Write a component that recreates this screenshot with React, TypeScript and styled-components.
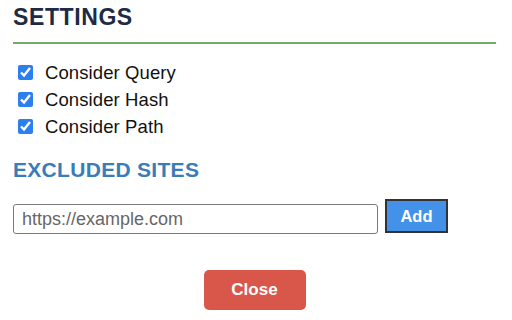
import React from "react";
import styled, { createGlobalStyle } from "styled-components";

const GlobalStyle = createGlobalStyle`
    html, body {
        margin: 0;
        padding: 0;
        background: #ffffff;
        font-family: "Liberation Sans", Arial, sans-serif;
    }
`;

const Panel = styled.div`
    width: 483px;
    padding: 4px 0 0 13px;
    display: flex;
    flex-direction: column;
`;

const Title = styled.h1`
    margin: 0;
    font-size: 23px;
    line-height: 26px;
    font-weight: 700;
    letter-spacing: 0.6px;
    color: #1e2b45;
    padding-bottom: 12px;
    border-bottom: 2px solid #72aa6a;
`;

const OptionList = styled.div`
    margin-top: 15px;
    display: flex;
    flex-direction: column;
`;

const OptionRow = styled.label`
    height: 27px;
    display: flex;
    align-items: center;
    padding-left: 5px;
    font-size: 18.5px;
    letter-spacing: 0.1px;
    color: #111;

    input {
        width: 15px;
        height: 15px;
        margin: 0 12px 0 0;
        accent-color: #2d7ff0;
    }
`;

const SubTitle = styled.h2`
    margin: 18px 0 0;
    font-size: 21px;
    line-height: 24px;
    font-weight: 700;
    letter-spacing: 0.3px;
    color: #3a7cb8;
`;

const AddRow = styled.div`
    margin-top: 17px;
    display: flex;
    align-items: flex-start;
`;

const SiteInput = styled.input`
    box-sizing: border-box;
    width: 365px;
    height: 30px;
    margin-top: 5px;
    padding: 0 8px;
    border: 1px solid #7a7a7a;
    border-radius: 3px;
    font-family: "Liberation Sans", Arial, sans-serif;
    font-size: 18px;
    color: #222;

    &::placeholder {
        color: #666;
    }
`;

const Button = styled.button<{ $bg: string }>`
    box-sizing: border-box;
    background: ${(p) => p.$bg};
    color: #fff;
    font-family: "Liberation Sans", Arial, sans-serif;
    font-weight: 700;
    cursor: pointer;
`;

const AddButton = styled(Button)`
    width: 63px;
    height: 34px;
    margin-left: 7px;
    border: 2px solid #333;
    font-size: 16.5px;
`;

const Footer = styled.div`
    margin-top: 36px;
    display: flex;
    justify-content: center;
`;

const CloseButton = styled(Button)`
    width: 102px;
    height: 40px;
    border: none;
    border-radius: 5px;
    font-size: 17px;
`;

const options = ["Consider Query", "Consider Hash", "Consider Path"];

const App = () => {
    return (
        <>
            <GlobalStyle />
            <Panel>
                <Title>SETTINGS</Title>
                <OptionList>
                    {options.map((o) => (
                        <OptionRow key={o}>
                            <input type="checkbox" defaultChecked />
                            {o}
                        </OptionRow>
                    ))}
                </OptionList>
                <SubTitle>EXCLUDED SITES</SubTitle>
                <AddRow>
                    <SiteInput placeholder="https://example.com" />
                    <AddButton $bg="#4391e8">Add</AddButton>
                </AddRow>
                <Footer>
                    <CloseButton $bg="#d9574a">Close</CloseButton>
                </Footer>
            </Panel>
        </>
    );
};

export default App;
